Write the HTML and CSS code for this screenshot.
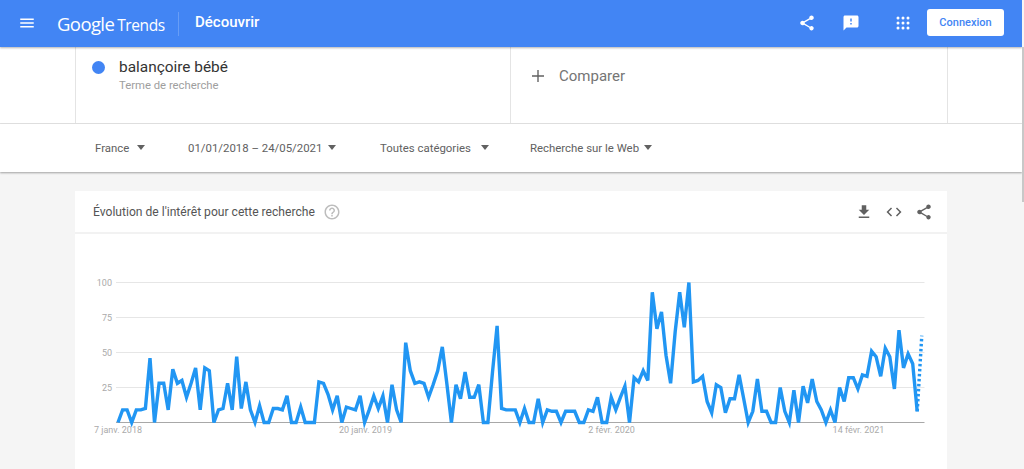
FILE: index.html
```html
<!DOCTYPE html>
<html lang="fr">
<head>
  <meta charset="UTF-8" />
  <title>Google Trends - Découvrir</title>
  <link rel="stylesheet" href="styles.css">
</head>
<body>

  <header class="topbar">
    <svg class="menu-icon" width="18" height="18" viewBox="0 0 24 24"><path d="M3 18h18v-2H3v2zm0-5h18v-2H3v2zm0-7v2h18V6H3z"/></svg>
    <div class="logo"><span class="logo-google">Google</span><span class="logo-trends">Trends</span></div>
    <div class="page-title">Découvrir</div>
    <div class="topbar-actions">
      <svg class="top-icon share" width="24" height="24" viewBox="0 0 24 24"><path d="M18 16.08c-.76 0-1.44.3-1.96.77L8.91 12.7c.05-.23.09-.46.09-.7s-.04-.47-.09-.7l7.05-4.11c.54.5 1.25.81 2.04.81 1.66 0 3-1.34 3-3s-1.34-3-3-3-3 1.34-3 3c0 .24.04.47.09.7L8.04 9.81C7.5 9.31 6.79 9 6 9c-1.66 0-3 1.34-3 3s1.34 3 3 3c.79 0 1.5-.31 2.04-.81l7.12 4.16c-.05.21-.08.43-.08.65 0 1.61 1.31 2.92 2.92 2.92 1.61 0 2.92-1.31 2.92-2.92s-1.31-2.92-2.92-2.92z"/></svg>
      <svg class="top-icon feedback" width="24" height="24" viewBox="0 0 24 24"><path d="M20 2H4c-1.1 0-1.99.9-1.99 2L2 22l4-4h14c1.1 0 2-.9 2-2V4c0-1.1-.9-2-2-2zm-7 12h-2v-2h2v2zm0-4h-2V6h2v4z"/></svg>
      <svg class="top-icon apps" width="18" height="18" viewBox="0 0 18 18">
        <circle cx="4" cy="4" r="1.5"/><circle cx="9" cy="4" r="1.5"/><circle cx="14" cy="4" r="1.5"/>
        <circle cx="4" cy="9" r="1.5"/><circle cx="9" cy="9" r="1.5"/><circle cx="14" cy="9" r="1.5"/>
        <circle cx="4" cy="14" r="1.5"/><circle cx="9" cy="14" r="1.5"/><circle cx="14" cy="14" r="1.5"/>
      </svg>
      <button class="signin">Connexion</button>
    </div>
  </header>

  <section class="search-row">
    <div class="search-box">
      <div class="term">
        <span class="term-dot"></span>
        <div>
          <div class="term-name">balançoire bébé</div>
          <div class="term-type">Terme de recherche</div>
        </div>
      </div>
      <div class="compare">
        <svg class="plus" width="14" height="14" viewBox="0 0 14 14"><path d="M0 6.2h6.2V0h1.6v6.2H14v1.6H7.8V14H6.2V7.8H0z"/></svg>
        <span>Comparer</span>
      </div>
    </div>
  </section>

  <section class="filters">
    <div class="filter filter-country">France <i class="caret"></i></div>
    <div class="filter filter-dates">01/01/2018 – 24/05/2021 <i class="caret"></i></div>
    <div class="filter filter-cat">Toutes catégories <i class="caret"></i></div>
    <div class="filter filter-web">Recherche sur le Web <i class="caret"></i></div>
  </section>

  <main class="card">
    <div class="card-head">
      <div class="card-title">Évolution de l'intérêt pour cette recherche</div>
      <svg class="help" width="18" height="18" viewBox="0 0 24 24"><path d="M11 18h2v-2h-2v2zm1-16C6.48 2 2 6.48 2 12s4.48 10 10 10 10-4.48 10-10S17.52 2 12 2zm0 18c-4.41 0-8-3.59-8-8s3.59-8 8-8 8 3.59 8 8-3.59 8-8 8zm0-14c-2.21 0-4 1.79-4 4h2c0-1.1.9-2 2-2s2 .9 2 2c0 2-3 1.75-3 5h2c0-2.25 3-2.5 3-5 0-2.21-1.79-4-4-4z"/></svg>
      <div class="card-actions">
        <svg width="18" height="18" viewBox="0 0 24 24"><path d="M19 9h-4V3H9v6H5l7 7 7-7zM5 18v2h14v-2H5z"/></svg>
        <svg width="18" height="18" viewBox="0 0 24 24"><path d="M9.4 16.6L4.8 12l4.6-4.6L8 6l-6 6 6 6 1.4-1.4zm5.2 0l4.6-4.6-4.6-4.6L16 6l6 6-6 6-1.4-1.4z"/></svg>
        <svg width="18" height="18" viewBox="0 0 24 24"><path d="M18 16.08c-.76 0-1.44.3-1.96.77L8.91 12.7c.05-.23.09-.46.09-.7s-.04-.47-.09-.7l7.05-4.11c.54.5 1.25.81 2.04.81 1.66 0 3-1.34 3-3s-1.34-3-3-3-3 1.34-3 3c0 .24.04.47.09.7L8.04 9.81C7.5 9.31 6.79 9 6 9c-1.66 0-3 1.34-3 3s1.34 3 3 3c.79 0 1.5-.31 2.04-.81l7.12 4.16c-.05.21-.08.43-.08.65 0 1.61 1.31 2.92 2.92 2.92 1.61 0 2.92-1.31 2.92-2.92s-1.31-2.92-2.92-2.92z"/></svg>
      </div>
    </div>
    <svg id="chart" class="chart" width="872" height="236"></svg>
  </main>

  <div class="scroll-thumb"></div>

  <script src="chart.js"></script>
</body>
</html>
```

FILE: styles.css
```css
html, body {
  margin: 0;
  padding: 0;
  height: 100%;
  overflow: hidden;
  font-family: Roboto, Arial, sans-serif;
}

body {
  width: 1022px;
  background-color: #f5f5f5;
}

.scroll-thumb {
  position: absolute;
  top: 47px;
  right: 0;
  width: 2px;
  height: 155px;
  background-color: #c8c8c8;
}

.topbar {
  display: flex;
  align-items: center;
  position: relative;
  z-index: 2;
  height: 47px;
  background-color: #4285f4;
  box-shadow: 0 1px 2px rgba(0, 0, 0, 0.3);
  color: white;
}

.menu-icon {
  margin-left: 18px;
  margin-top: -1px;
  fill: white;
}

.logo {
  margin-left: 21px;
  margin-bottom: -1px;
  width: 121px;
  height: 24px;
  border-right: 1px solid rgba(255, 255, 255, 0.2);
  line-height: 24px;
  font-family: "Open Sans", sans-serif;
  white-space: nowrap;
}

.logo-google {
  font-size: 18.5px;
  letter-spacing: -0.6px;
}

.logo-trends {
  margin-left: 3px;
  font-size: 15.5px;
  letter-spacing: -0.4px;
}

.page-title {
  margin-left: 16px;
  margin-top: -4px;
  font-size: 15px;
  font-weight: 500;
}

.topbar-actions {
  display: flex;
  align-items: center;
  margin-left: auto;
  margin-right: 18px;
  margin-bottom: 2px;
}

.top-icon {
  fill: white;
  width: 18px;
  height: 18px;
}

.feedback {
  margin-left: 26px;
}

.apps {
  margin-left: 34px;
}

.signin {
  margin-left: 15px;
  width: 77px;
  height: 27px;
  padding: 0;
  background-color: white;
  border: none;
  border-radius: 3px;
  color: #4285f4;
  font-family: inherit;
  font-size: 11px;
  font-weight: 500;
}

.search-row {
  height: 76px;
  background-color: white;
  border-bottom: 1px solid #e4e4e4;
}

.search-box {
  display: flex;
  margin-left: 75px;
  width: 871px;
  height: 76px;
  border-left: 1px solid #e4e4e4;
  border-right: 1px solid #e4e4e4;
}

.term {
  display: flex;
  width: 435px;
  padding-left: 16px;
  border-right: 1px solid #e4e4e4;
  box-sizing: border-box;
}

.term-dot {
  width: 13px;
  height: 13px;
  margin-top: 14px;
  border-radius: 50%;
  background-color: #4285f4;
}

.term-name {
  margin-top: 10px;
  margin-left: 14px;
  font-size: 15.4px;
  line-height: 20px;
  color: #333;
}

.term-type {
  margin-top: 2px;
  margin-left: 14px;
  font-size: 11.3px;
  line-height: 14px;
  color: #9e9e9e;
}

.compare {
  display: flex;
  align-items: center;
  padding-left: 21px;
  padding-bottom: 19px;
  color: #757575;
  font-size: 15px;
}

.plus {
  margin-right: 15px;
  fill: #616161;
  width: 12px;
  height: 12px;
}

.filters {
  display: flex;
  align-items: center;
  height: 48px;
  padding-left: 95px;
  padding-bottom: 1px;
  box-sizing: border-box;
  background-color: white;
  box-shadow: 0 1px 2px rgba(0, 0, 0, 0.35);
  font-size: 11.4px;
  color: #616161;
}

.filter {
  display: flex;
  align-items: center;
  white-space: nowrap;
}

.filter-country {
  width: 93px;
}

.filter-dates {
  width: 192px;
}

.filter-cat {
  width: 150px;
}

.caret {
  display: inline-block;
  margin-left: 6px;
  border-left: 4.5px solid transparent;
  border-right: 4.5px solid transparent;
  border-top: 5px solid #616161;
}

.filter-country .caret {
  margin-left: 8px;
}

.filter-cat .caret {
  margin-left: 10px;
}

.filter-web .caret {
  margin-left: 5px;
}

.card {
  margin-top: 19px;
  margin-left: 75px;
  width: 872px;
  background-color: white;
}

.card-head {
  display: flex;
  align-items: center;
  height: 41px;
  padding-left: 18px;
  border-bottom: 2px solid #f2f2f2;
}

.card-title {
  font-size: 12.1px;
  color: #555;
}

.help {
  margin-left: 8px;
  fill: #bdbdbd;
}

.card-actions {
  display: flex;
  gap: 12px;
  margin-left: auto;
  margin-right: 14px;
}

.card-actions svg {
  fill: #616161;
}

.chart {
  display: block;
}

.grid-line {
  stroke: #e6e6e6;
  stroke-width: 1;
}

.base-line {
  stroke: #a8a8a8;
  stroke-width: 1;
}

.axis-label {
  font-size: 9px;
  fill: #aaa;
}

.trend-line {
  fill: none;
  stroke: #2196f3;
  stroke-width: 3.4;
  stroke-linejoin: miter;
}

.trend-partial {
  fill: none;
  stroke: #2196f3;
  stroke-width: 3.4;
  stroke-dasharray: 2.5 2.5;
}
```

FILE: chart.js
```js
// weekly interest values read off the graph
const values = [
  0, 9, 9, 0, 9, 9, 10, 46, 0, 28, 28, 9, 38, 28, 30, 18, 28, 39, 9, 39,
  37, 0, 9, 10, 28, 9, 47, 10, 29, 9, 0, 12, 0, 0, 10, 10, 9, 19, 0, 0,
  11, 0, 0, 0, 29, 28, 20, 9, 19, 0, 11, 10, 9, 19, 0, 9, 19, 10, 19, 0,
  27, 9, 0, 57, 37, 28, 29, 28, 18, 27, 37, 54, 28, 0, 27, 17, 36, 18, 18, 27,
  0, 0, 36, 69, 10, 9, 9, 9, 0, 10, 0, 0, 17, 0, 9, 8, 8, 0, 8, 8,
  8, 0, 0, 9, 8, 18, 0, 0, 18, 9, 18, 26, 0, 32, 29, 37, 30, 93, 67, 79,
  48, 28, 65, 93, 68, 100, 29, 30, 33, 15, 7, 27, 25, 7, 17, 17, 34, 17, 0, 8,
  31, 8, 8, 0, 0, 25, 8, 0, 23, 0, 26, 14, 31, 15, 9, 0, 9, 0, 25, 15,
  32, 32, 24, 34, 33, 51, 47, 33, 53, 47, 24, 66, 39, 49, 42, 8
];

const chart = document.getElementById('chart');
const ns = 'http://www.w3.org/2000/svg';

// chart svg starts at x=75, y=234 in the page
const left = 43;
const right = 849.5;
const step = 4.567;
const yZero = 188.5;
const unit = 1.4;

function yFor(v) {
  return yZero - v * unit;
}

function add(tag, attrs, text) {
  const el = document.createElementNS(ns, tag);
  for (const key in attrs) {
    el.setAttribute(key, attrs[key]);
  }
  if (text) {
    el.textContent = text;
  }
  chart.appendChild(el);
}

[100, 75, 50, 25].forEach(function (v) {
  add('line', { class: 'grid-line', x1: left - 2, x2: right, y1: yFor(v), y2: yFor(v) });
  add('text', { class: 'axis-label', x: left - 6, y: yFor(v) + 3, 'text-anchor': 'end' }, String(v));
});
add('line', { class: 'base-line', x1: left - 2, x2: right, y1: yZero, y2: yZero });

const dates = [
  ['7 janv. 2018', 43],
  ['20 janv. 2019', 290.5],
  ['2 févr. 2020', 536.5],
  ['14 févr. 2021', 783.5]
];
dates.forEach(function (d) {
  add('text', { class: 'axis-label', x: d[1], y: 199, 'text-anchor': 'middle' }, d[0]);
});

const points = values.map(function (v, i) {
  return (left + i * step).toFixed(1) + ',' + yFor(v).toFixed(1);
});
add('polyline', { class: 'trend-line', points: points.join(' ') });

const lastX = left + (values.length - 1) * step;
add('line', {
  class: 'trend-partial',
  x1: lastX, y1: yFor(values[values.length - 1]),
  x2: lastX + step, y2: yFor(62)
});
```
